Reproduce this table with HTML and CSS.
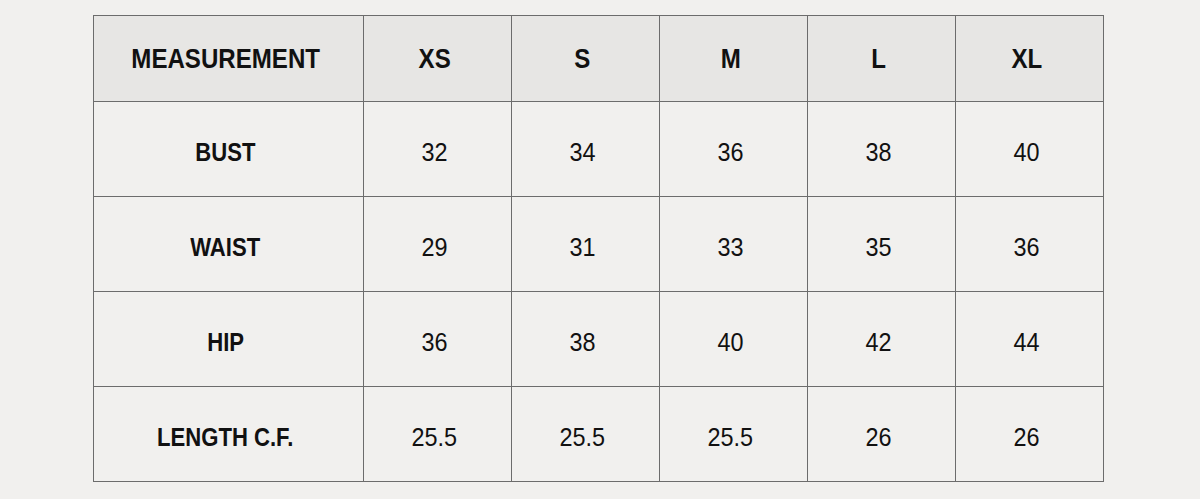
FILE: index.html
```html
<!DOCTYPE html>
<html lang="en">
<head>
<meta charset="utf-8">
<title>Size Chart</title>
<link rel="stylesheet" href="styles.css">
</head>
<body>
<div class="page">
  <table class="chart">
    <colgroup>
      <col class="c-label">
      <col class="c-size">
      <col class="c-size">
      <col class="c-size">
      <col class="c-size">
      <col class="c-size">
    </colgroup>
    <thead>
      <tr>
        <th><span class="b">MEASUREMENT</span></th>
        <th><span class="b">XS</span></th>
        <th><span class="b">S</span></th>
        <th><span class="b">M</span></th>
        <th><span class="b">L</span></th>
        <th><span class="b">XL</span></th>
      </tr>
    </thead>
    <tbody>
      <tr>
        <th><span class="r">BUST</span></th>
        <td><span class="n">32</span></td><td><span class="n">34</span></td><td><span class="n">36</span></td><td><span class="n">38</span></td><td><span class="n">40</span></td>
      </tr>
      <tr>
        <th><span class="r">WAIST</span></th>
        <td><span class="n">29</span></td><td><span class="n">31</span></td><td><span class="n">33</span></td><td><span class="n">35</span></td><td><span class="n">36</span></td>
      </tr>
      <tr>
        <th><span class="r">HIP</span></th>
        <td><span class="n">36</span></td><td><span class="n">38</span></td><td><span class="n">40</span></td><td><span class="n">42</span></td><td><span class="n">44</span></td>
      </tr>
      <tr>
        <th><span class="r">LENGTH C.F.</span></th>
        <td><span class="n">25.5</span></td><td><span class="n">25.5</span></td><td><span class="n">25.5</span></td><td><span class="n">26</span></td><td><span class="n">26</span></td>
      </tr>
    </tbody>
  </table>
</div>
</body>
</html>
```

FILE: styles.css
```css
html, body {
  margin: 0;
  padding: 0;
  background: #f1f0ee;
}

body {
  font-family: "Liberation Sans", Arial, sans-serif;
  color: #111111;
}

.page {
  padding: 15px 0 0 93px;
}

.chart {
  border-collapse: collapse;
  table-layout: fixed;
  width: 1011px;
}

.c-label { width: 270px; }
.c-size { width: 148px; }

.chart th,
.chart td {
  border: 1px solid #6c6c6c;
  text-align: center;
  vertical-align: middle;
  padding: 0 6px 0 0;
}

.chart thead th {
  background: #e7e6e4;
  height: 85px;
}

.chart tbody tr {
  height: 95px;
}

.chart tbody th,
.chart tbody td {
  padding-top: 7px;
}

.b,
.r,
.n {
  display: inline-block;
  white-space: nowrap;
  transform-origin: center;
}

.b {
  font-size: 28px;
  font-weight: 700;
  transform: scaleX(0.86);
}

.r {
  font-size: 26px;
  font-weight: 700;
  transform: scaleX(0.85);
}

.n {
  font-size: 26px;
  font-weight: 400;
  transform: scaleX(0.9);
}
```
